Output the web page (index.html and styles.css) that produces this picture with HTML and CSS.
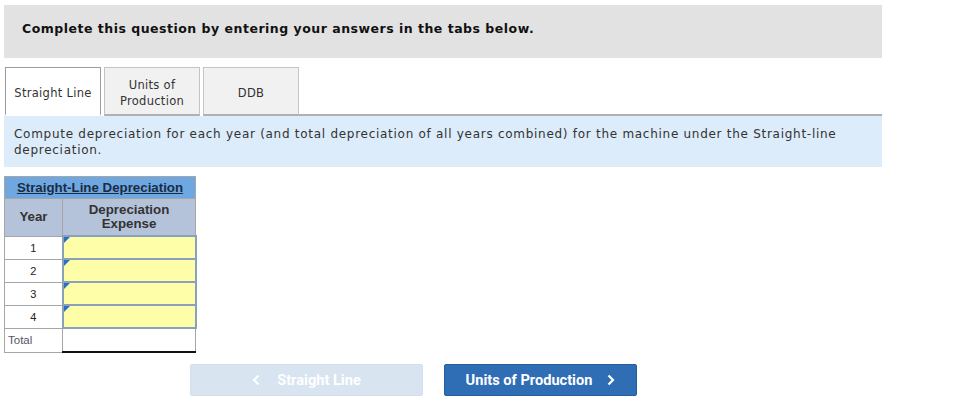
FILE: index.html
```html
<!doctype html>
<html lang="en">
<head>
  <meta charset="utf-8" />
  <title>Depreciation question</title>
  <link rel="stylesheet" href="styles.css">
</head>
<body>
  <div id="page">
    <div class="prompt">Complete this question by entering your answers in the tabs below.</div>

    <div class="tabs">
      <div class="tab active">Straight Line</div>
      <div class="tab">Units of<br>Production</div>
      <div class="tab">DDB</div>
      <div class="tabfill"></div>
    </div>

    <div class="instr">Compute depreciation for each year (and total depreciation of all years combined) for the machine under the Straight-line depreciation.</div>

    <table class="sheet">
      <tr><th class="title" colspan="2"><u>Straight-Line Depreciation</u></th></tr>
      <tr><th class="hd yr">Year</th><th class="hd">Depreciation<br>Expense</th></tr>
      <tr><td class="num">1</td><td class="inp"><span class="flag"></span></td></tr>
      <tr><td class="num">2</td><td class="inp"><span class="flag"></span></td></tr>
      <tr><td class="num">3</td><td class="inp"><span class="flag"></span></td></tr>
      <tr><td class="num">4</td><td class="inp"><span class="flag"></span></td></tr>
      <tr><td class="lbl">Total</td><td class="tot"></td></tr>
    </table>

    <div class="nav">
      <button class="navbtn off">
        <svg class="chev" width="8" height="12" viewBox="0 0 8 12"><path d="M6.5 1.5 L2 6 L6.5 10.5" fill="none" stroke="currentColor" stroke-width="2.2"/></svg>
        Straight Line
      </button>
      <button class="navbtn on">
        Units of Production
        <svg class="chev" width="8" height="12" viewBox="0 0 8 12"><path d="M1.5 1.5 L6 6 L1.5 10.5" fill="none" stroke="currentColor" stroke-width="2.2"/></svg>
      </button>
    </div>
  </div>
</body>
</html>
```

FILE: styles.css
```css
html, body { margin:0; padding:0; background:#fff; color:#222;
  font-family:"DejaVu Sans", Verdana, sans-serif; }
#page{ padding:5px 0 0 4px; width:878px; }

.prompt{ height:53px; background:#e2e2e2; padding:0 0 6px 18px; box-sizing:border-box;
  display:flex; align-items:center; font-weight:bold; font-size:12.5px; letter-spacing:0.5px; color:#111; }

.tabs{ display:flex; margin-top:9px; height:49px; align-items:stretch; }
.tab{ box-sizing:border-box; width:96px; margin-right:3px; display:flex; align-items:center; justify-content:center;
  padding-top:3px; text-align:center; font-size:11.5px; line-height:16px; letter-spacing:0.3px; color:#333;
  background:#f1f1f1; border:1px solid #c4c4c4; border-bottom:2px solid #b0b0b0; }
.tab.active{ margin-left:1px; background:#fff; border-color:#9c9c9c; border-bottom:2px solid #fff; }
.tabfill{ flex:1; border-bottom:2px solid #b0b0b0; margin-left:-3px; }

.instr{ background:#dcecfa; padding:10px 10px 9px 10px; font-size:12px; line-height:16px;
  letter-spacing:0.72px; color:#333; }

.sheet{ margin-top:9px; border-collapse:collapse; font-family:"Liberation Sans", Arial, sans-serif;
  border:1px solid #a6a6a6; }
.sheet th, .sheet td{ border:1px solid #a6a6a6; padding:0; }
.title{ background:#6fa8e0; height:21px; font-size:13.3px; color:#1a2b45; width:190px; }
.hd{ background:#b5c3da; height:36px; font-size:13.3px; line-height:14px; color:#333; }
.yr{ width:57px; }
.num{ text-align:center; font-size:11px; height:22px; color:#222; }
.inp{ position:relative; background:#fefea8; border:2px solid #8aa0bd !important; }
.flag{ position:absolute; left:0; top:0; width:0; height:0;
  border-top:6px solid #2a6fc4; border-right:6px solid transparent; }
.lbl{ font-size:11.5px; height:23px; color:#556; padding-left:3px !important; }
.tot{ background:#fff; border-bottom:2px solid #111 !important; }

.nav{ display:flex; gap:21px; margin-top:11px; padding-left:186px; }
.navbtn{ height:32px; border-radius:2px; font-family:Roboto, "Liberation Sans", sans-serif;
  font-weight:bold; font-size:14.6px; color:#fff; padding:0;
  display:flex; align-items:center; justify-content:center; }
.navbtn.off{ width:233px; background:#d8e4f0; border:1px solid #d3dfec; }
.navbtn.on{ width:193px; background:#2f6db5; border:1px solid #245d9e; }
.navbtn.off .chev{ margin-right:17px; }
.navbtn.on .chev{ margin-left:15px; }
```
